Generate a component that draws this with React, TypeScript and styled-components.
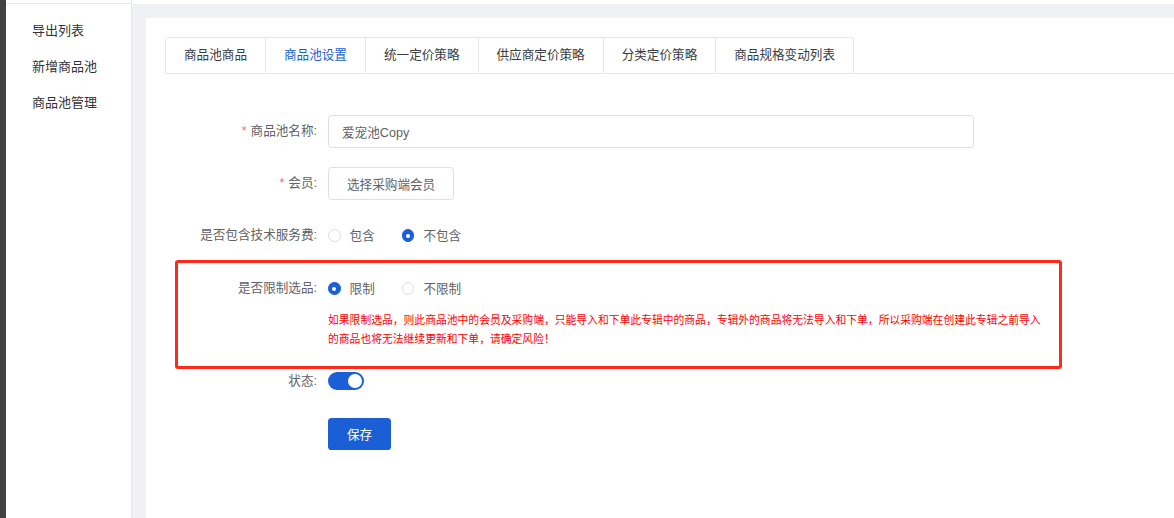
import { useState } from 'react';
import styled, { createGlobalStyle } from 'styled-components';

const GlobalStyle = createGlobalStyle`
  html, body {
    margin: 0;
    padding: 0;
    height: 100%;
    overflow: hidden;
  }
  body {
    font-family: "Liberation Sans", "Noto Sans CJK SC", sans-serif;
    color: #606266;
    background: #fff;
  }
  * { box-sizing: border-box; }
`;

const BLUE = '#1a5fd6';

const tabs = ['商品池商品', '商品池设置', '统一定价策略', '供应商定价策略', '分类定价策略', '商品规格变动列表'];
const menu = ['导出列表', '新增商品池', '商品池管理'];

const Page = styled.div`
  display: flex;
  height: 100vh;
`;

const DarkStrip = styled.div`
  width: 6px;
  flex: none;
  background: #424242;
`;

const Sidebar = styled.aside`
  width: 126px;
  flex: none;
  padding-top: 3px;
  border-right: 1px solid #e6e6e6;
  background: #fff;
`;

const SideMenu = styled.ul`
  list-style: none;
  margin: 0;
  padding: 12px 0 0 0;
  border-top: 1px solid #e8e8e8;
`;

const SideItem = styled.li`
  height: 36px;
  line-height: 29px;
  padding-left: 26px;
  font-size: 13px;
  color: #333;
`;

const Main = styled.main`
  flex: 1;
  border-top: 4px solid #fff;
  background: #f0f1f5;
  padding: 14px 0 0 14px;
  display: flex;
`;

const Card = styled.section`
  flex: 1;
  background: #fff;
  padding: 19px 0 0 19px;
`;

const TabBar = styled.div`
  display: flex;
  border-bottom: 1px solid #e4e7ed;
`;

const Tab = styled.div<{ $active?: boolean }>`
  height: 36px;
  line-height: 35px;
  padding: 0 18px;
  font-size: 12.6px;
  color: ${(p) => (p.$active ? BLUE : '#3a3c40')};
  background: #fff;
  border: 1px solid #e4e7ed;
  border-left-width: 0;
  border-bottom: ${(p) => (p.$active ? '1px solid #fff' : 'none')};
  margin-bottom: ${(p) => (p.$active ? '-1px' : '0')};
  &:first-child {
    border-left-width: 1px;
    border-top-left-radius: 3px;
  }
  &:last-child {
    border-top-right-radius: 3px;
  }
`;

const Form = styled.form`
  padding: 41px 0 0 10px;
  width: 897px;
`;

const Row = styled.div<{ $labelWidth?: number; $gap?: number }>`
  display: grid;
  grid-template-columns: ${(p) => p.$labelWidth ?? 153}px 1fr;
  align-items: start;
  margin-bottom: ${(p) => p.$gap ?? 19}px;
`;

const Label = styled.label`
  height: 33px;
  line-height: 33px;
  text-align: right;
  padding-right: 11px;
  font-size: 12.6px;
  color: #606266;
  white-space: nowrap;
`;

const Star = styled.span`
  color: #f56c6c;
  margin-right: 4px;
`;

const Control = styled.div`
  min-height: 33px;
  display: flex;
  flex-direction: column;
  justify-content: center;
`;

const Input = styled.input`
  width: 646px;
  height: 33px;
  border: 1px solid #dcdfe6;
  border-radius: 3.6px;
  padding: 0 13px;
  font-family: inherit;
  font-size: 12.6px;
  color: #606266;
  outline: none;
`;

const PlainButton = styled.button`
  align-self: flex-start;
  height: 33px;
  padding: 0 18px;
  border: 1px solid #dcdfe6;
  border-radius: 3.6px;
  background: #fff;
  font-family: inherit;
  font-size: 12.6px;
  color: #606266;
`;

const PrimaryButton = styled.button`
  align-self: flex-start;
  height: 32px;
  width: 63px;
  border: none;
  border-radius: 3.6px;
  background: ${BLUE};
  font-family: inherit;
  font-size: 12.6px;
  color: #fff;
`;

const RadioGroup = styled.div`
  display: flex;
  align-items: center;
  height: 33px;
`;

const RadioItem = styled.span`
  display: inline-flex;
  align-items: center;
  margin-right: 27px;
  font-size: 12.6px;
  line-height: 14px;
  color: #606266;
  cursor: pointer;
`;

const RadioDot = styled.span<{ $checked?: boolean }>`
  width: 12.6px;
  height: 12.6px;
  border-radius: 50%;
  margin-right: 9px;
  border: 1px solid ${(p) => (p.$checked ? BLUE : '#dcdfe6')};
  background: ${(p) => (p.$checked ? BLUE : '#fff')};
  display: inline-flex;
  align-items: center;
  justify-content: center;
  &::after {
    content: '';
    width: 4px;
    height: 4px;
    border-radius: 50%;
    background: #fff;
    display: ${(p) => (p.$checked ? 'block' : 'none')};
  }
`;

const Highlight = styled.div`
  width: 887px;
  margin-top: -11px;
  margin-bottom: 3px;
  border: 3px solid #ff2a1a;
  border-radius: 3px;
  padding: 9px 0 17px;
`;

const Warning = styled.p`
  margin: 6px 0 0;
  max-width: 716px;
  font-size: 10.8px;
  line-height: 19px;
  color: #ff0000;
`;

const Switch = styled.button<{ $on: boolean }>`
  position: relative;
  width: 36px;
  height: 18px;
  border: none;
  border-radius: 9px;
  padding: 0;
  background: ${(p) => (p.$on ? BLUE : '#dcdfe6')};
  &::after {
    content: '';
    position: absolute;
    top: 2px;
    left: ${(p) => (p.$on ? '20px' : '2px')};
    width: 14px;
    height: 14px;
    border-radius: 50%;
    background: #fff;
  }
`;

const SwitchLabel = styled(Label)`
  height: 18px;
  line-height: 18px;
`;

const SwitchControl = styled(Control)`
  min-height: 18px;
`;

type RadioProps = { options: string[]; value: string; onChange: (v: string) => void };

const Radios = ({ options, value, onChange }: RadioProps) => (
  <RadioGroup>
    {options.map((o) => (
      <RadioItem key={o} onClick={() => onChange(o)}>
        <RadioDot $checked={o === value} />
        {o}
      </RadioItem>
    ))}
  </RadioGroup>
);

export default function App() {
  const [fee, setFee] = useState('不包含');
  const [limit, setLimit] = useState('限制');
  const [on, setOn] = useState(true);

  return (
    <>
      <GlobalStyle />
      <Page>
        <DarkStrip />
        <Sidebar>
          <SideMenu>
            {menu.map((m) => (
              <SideItem key={m}>{m}</SideItem>
            ))}
          </SideMenu>
        </Sidebar>
        <Main>
          <Card>
            <TabBar>
              {tabs.map((t) => (
                <Tab key={t} $active={t === '商品池设置'}>
                  {t}
                </Tab>
              ))}
            </TabBar>
            <Form onSubmit={(e) => e.preventDefault()}>
              <Row>
                <Label>
                  <Star>*</Star>商品池名称:
                </Label>
                <Control>
                  <Input defaultValue="爱宠池Copy" />
                </Control>
              </Row>
              <Row>
                <Label>
                  <Star>*</Star>会员:
                </Label>
                <Control>
                  <PlainButton type="button">选择采购端会员</PlainButton>
                </Control>
              </Row>
              <Row>
                <Label>是否包含技术服务费:</Label>
                <Control>
                  <Radios options={['包含', '不包含']} value={fee} onChange={setFee} />
                </Control>
              </Row>
              <Highlight>
                <Row $labelWidth={150} $gap={0}>
                  <Label>是否限制选品:</Label>
                  <Control>
                    <Radios options={['限制', '不限制']} value={limit} onChange={setLimit} />
                    <Warning>
                      如果限制选品，则此商品池中的会员及采购端，只能导入和下单此专辑中的商品，专辑外的商品将无法导入和下单，所以采购端在创建此专辑之前导入的商品也将无法继续更新和下单，请确定风险！
                    </Warning>
                  </Control>
                </Row>
              </Highlight>
              <Row $gap={27}>
                <SwitchLabel>状态:</SwitchLabel>
                <SwitchControl>
                  <Switch type="button" $on={on} onClick={() => setOn(!on)} />
                </SwitchControl>
              </Row>
              <Row>
                <span />
                <Control>
                  <PrimaryButton type="submit">保存</PrimaryButton>
                </Control>
              </Row>
            </Form>
          </Card>
        </Main>
      </Page>
    </>
  );
}
